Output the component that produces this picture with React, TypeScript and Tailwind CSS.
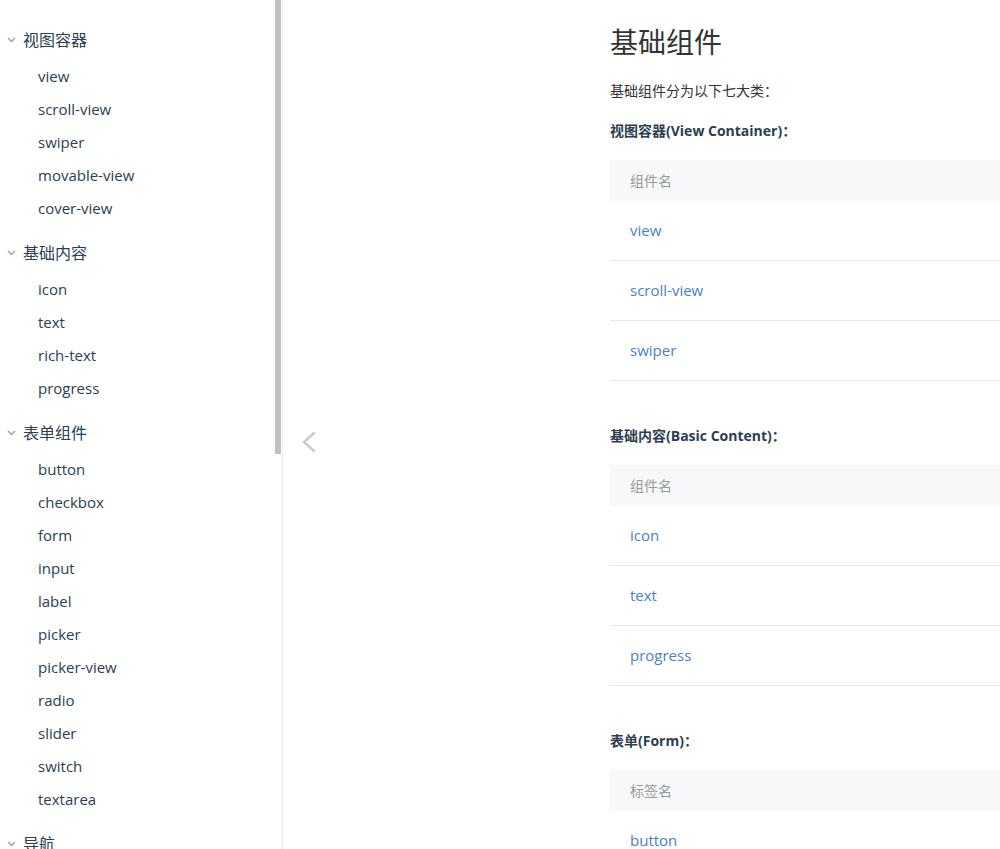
import React from "react";

const groups: { title: string; items: string[] }[] = [
  { title: "视图容器", items: ["view", "scroll-view", "swiper", "movable-view", "cover-view"] },
  { title: "基础内容", items: ["icon", "text", "rich-text", "progress"] },
  {
    title: "表单组件",
    items: ["button", "checkbox", "form", "input", "label", "picker", "picker-view", "radio", "slider", "switch", "textarea"],
  },
  { title: "导航", items: ["navigator"] },
];

const sections: { title: string; head: string; rows: string[] }[] = [
  { title: "视图容器(View Container)：", head: "组件名", rows: ["view", "scroll-view", "swiper"] },
  { title: "基础内容(Basic Content)：", head: "组件名", rows: ["icon", "text", "progress"] },
  { title: "表单(Form)：", head: "标签名", rows: ["button", "checkbox", "form"] },
];

function Caret() {
  return (
    <svg width="9" height="6" viewBox="0 0 9 6" className="shrink-0">
      <path d="M1 1 L4.5 4.5 L8 1" fill="none" stroke="#9aa0a6" strokeWidth="1.4" />
    </svg>
  );
}

export default function App() {
  return (
    <div
      className="flex h-[849px] w-[1000px] overflow-hidden bg-white text-[#333]"
      style={{ fontFamily: '"Open Sans", "Noto Sans CJK SC", sans-serif' }}
    >
      <aside className="relative h-full w-[283px] shrink-0 overflow-hidden border-r border-[#eaecef]">
        <div className="pt-[22px]">
          {groups.map((g) => (
            <div key={g.title} className="mb-[10px]">
              <div className="flex h-[36px] items-center gap-[7px] pl-[7px] text-[16px] text-[#2c3e50]">
                <Caret />
                <span>{g.title}</span>
              </div>
              <ul className="pt-[2px]">
                {g.items.map((it) => (
                  <li key={it} className="flex h-[33px] items-center pl-[38px] text-[15px] text-[#2c3e50]">
                    {it}
                  </li>
                ))}
              </ul>
            </div>
          ))}
        </div>
        <div className="absolute right-[1px] top-0 h-[454px] w-[6px] bg-[#c1c1c1]" />
      </aside>

      <main className="relative h-full flex-1 overflow-hidden pl-[327px] pt-[24px]">
        <div className="absolute left-[18px] top-[431px]">
          <svg width="16" height="22" viewBox="0 0 16 22">
            <path d="M13.5 1.5 L3 11 L13.5 20.5" fill="none" stroke="#c8ccd2" strokeWidth="2.4" />
          </svg>
        </div>
        <div className="w-[600px]">
          <h1 className="text-[28px] leading-[36px] font-normal text-[#333]">基础组件</h1>
          <p className="mt-[20px] text-[14px] leading-[22px] text-[#333]">基础组件分为以下七大类：</p>
          {sections.map((s, i) => (
            <div key={s.title} className={i === 0 ? "mt-[19px]" : "mt-[45px]"}>
              <div className="text-[14px] font-bold leading-[20px] text-[#2c3e50]">{s.title}</div>
              <div className="mt-[19px]">
                <div className="flex h-[41px] items-center bg-[#f7f8fa] pl-[20px] text-[14px] text-[#999]">{s.head}</div>
                {s.rows.map((r) => (
                  <div
                    key={r}
                    className="box-border flex h-[60px] items-center border-b border-[#e5e7eb] pl-[20px] text-[15px] text-[#4a80c8]"
                  >
                    {r}
                  </div>
                ))}
              </div>
            </div>
          ))}
        </div>
      </main>
    </div>
  );
}
